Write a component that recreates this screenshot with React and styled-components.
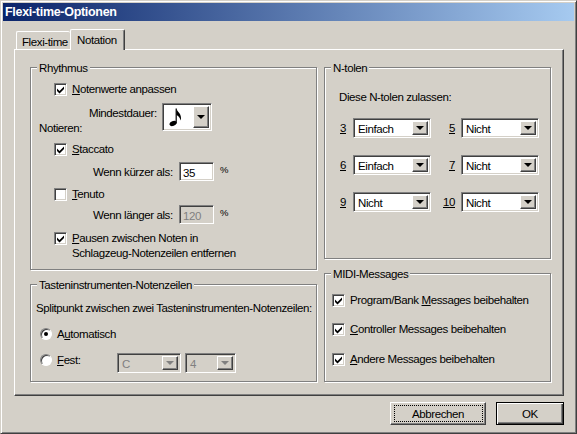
import React from 'react'
import styled, { createGlobalStyle, css } from 'styled-components'

const face = '#d4d0c8'

const Global = createGlobalStyle`
  * { box-sizing: border-box; }
  html, body { margin: 0; padding: 0; background: ${face}; }
  body {
    font: 11.5px/14px "Liberation Sans", Arial, sans-serif;
    letter-spacing: -0.4px;
    color: #000;
  }
`

const raised = css`
  border: 1px solid;
  border-color: #fff #404040 #404040 #fff;
  box-shadow: inset -1px -1px 0 #808080;
`

const sunken = css`
  border: 1px solid;
  border-color: #808080 #fff #fff #808080;
  box-shadow: inset 1px 1px 0 #404040, inset -1px -1px 0 ${face};
`

const Dialog = styled.div`
  width: 577px;
  height: 434px;
  background: ${face};
  border: 1px solid;
  border-color: ${face} #404040 #404040 ${face};
  box-shadow: inset 1px 1px 0 #fff, inset -1px -1px 0 #808080;
  padding: 2px;
  overflow: hidden;
`

const TitleBar = styled.div`
  height: 18px;
  padding: 1px 0 0 2px;
  font-weight: bold;
  font-size: 12.5px;
  line-height: 16px;
  letter-spacing: -0.3px;
  color: #fff;
  background: linear-gradient(90deg, #0a246a, #a6caf0);
`

const Tabs = styled.div`
  display: flex;
  align-items: flex-end;
  height: 20px;
  margin: 8px 0 0 13px;
  position: relative;
  z-index: 1;
`

const Tab = styled.div`
  height: ${p => (p.$active ? 21 : 18)}px;
  width: ${p => (p.$active ? 55 : 54)}px;
  margin-bottom: ${p => (p.$active ? -1 : 0)}px;
  padding: ${p => (p.$active ? '3px 0 0 6px' : '3px 0 0 5px')};
  background: ${face};
  border-top: 1px solid #fff;
  border-left: 1px solid #fff;
  border-right: ${p => (p.$active ? '1px solid #404040' : 'none')};
  border-radius: 2px 2px 0 0;
  box-shadow: ${p => (p.$active ? 'inset -1px 0 0 #808080' : 'none')};
  white-space: nowrap;
`

const Panel = styled.div`
  display: flex;
  gap: 7px;
  width: 550px;
  height: 347px;
  margin-left: 11px;
  padding: 17px 0 0 15px;
  border: 1px solid;
  border-color: #fff #404040 #404040 #fff;
  box-shadow: inset -1px -1px 0 #808080;
`

const Column = styled.div`
  display: flex;
  flex-direction: column;
  gap: 14px;
  width: ${p => p.$w}px;
`

const Group = styled.div`
  position: relative;
  display: flex;
  flex-direction: column;
  align-items: flex-start;
  height: ${p => p.$h}px;
  padding-top: ${p => p.$pt}px;
  border: 1px solid #808080;
  box-shadow: 1px 1px 0 #fff, inset 1px 1px 0 #fff;
`

const Legend = styled.div`
  position: absolute;
  top: -7px;
  left: 6px;
  padding: 0 2px;
  background: ${face};
  white-space: nowrap;
`

const Row = styled.div`
  display: flex;
  align-items: ${p => p.$align || 'center'};
  gap: ${p => p.$gap || 0}px;
  height: ${p => p.$h || 14}px;
  margin-top: ${p => p.$mt || 0}px;
  margin-left: ${p => p.$ml || 0}px;
  white-space: nowrap;
`

const Key = styled.span`
  text-decoration: underline;
`

const CheckBox = styled.span`
  ${sunken}
  display: flex;
  align-items: center;
  justify-content: center;
  flex: none;
  width: 13px;
  height: 13px;
  background: #fff;
`

const RadioBox = styled.span`
  display: flex;
  align-items: center;
  justify-content: center;
  flex: none;
  width: 12px;
  height: 12px;
  border-radius: 50%;
  border: 1px solid;
  border-color: #808080 #fff #fff #808080;
  box-shadow: inset 1px 1px 0 #404040;
  background: #fff;
  margin-top: ${p => p.$mt || 0}px;
`

const RadioDot = styled.span`
  width: 4px;
  height: 4px;
  border-radius: 50%;
  background: #000;
`

const Label = styled.span`
  display: block;
  flex: none;
  width: ${p => (p.$w ? `${p.$w}px` : 'auto')};
  margin-top: ${p => p.$mt || 0}px;
  margin-left: ${p => p.$ml || 0}px;
`

const Percent = styled.span`
  flex: none;
  margin: -3px 0 0 6px;
  font-size: 9.5px;
`

const Digit = styled.span`
  flex: none;
  width: ${p => p.$w}px;
  padding-right: ${p => p.$pr}px;
  text-align: right;
`

const SecondLine = styled.div`
  margin: 1px 0 0 41px;
  white-space: nowrap;
`

const Field = styled.span`
  ${sunken}
  display: block;
  flex: none;
  width: 35px;
  height: 19px;
  padding: 3px 0 0 3px;
  background: ${p => (p.$disabled ? face : '#fff')};
  color: ${p => (p.$disabled ? '#808080' : '#000')};
`

const Combo = styled.span`
  ${sunken}
  display: flex;
  flex: none;
  justify-content: space-between;
  width: ${p => p.$w}px;
  height: ${p => p.$h}px;
  margin-left: ${p => p.$ml || 0}px;
  padding: 2px;
  background: ${p => (p.$disabled ? face : '#fff')};
  color: ${p => (p.$disabled ? '#808080' : '#000')};
`

const ComboText = styled.span`
  padding: 1px 0 0 2px;
`

const ComboButton = styled.span`
  ${raised}
  display: flex;
  align-items: center;
  justify-content: center;
  flex: none;
  width: 16px;
  background: ${face};
  &::after {
    content: '';
    border: 4px solid transparent;
    border-top-color: ${p => (p.$disabled ? '#808080' : '#000')};
    border-bottom-width: 0;
  }
`

const Footer = styled.div`
  display: flex;
  justify-content: flex-end;
  gap: 10px;
  width: 561px;
  margin-top: 6px;
`

const Button = styled.div`
  ${raised}
  display: flex;
  align-items: center;
  justify-content: center;
  width: ${p => p.$w}px;
  height: 23px;
  background: ${face};
  ${p => p.$default && css`
    border-color: #000;
    box-shadow: inset 1px 1px 0 #fff, inset -1px -1px 0 #404040, inset -2px -2px 0 #808080;
  `}
`

const FocusRing = styled.span`
  display: flex;
  align-items: center;
  justify-content: center;
  width: 89px;
  height: 17px;
  border: 1px dotted #000;
`

const Check = () => (
  <svg width="11" height="11" viewBox="0 0 11 11">
    <path d="M2 4.5l2.5 2.5L9 2.5v2.6L4.5 9.6 2 7.1z" fill="#000" />
  </svg>
)

const CheckRow = ({ checked, ml, mt, children }) => (
  <Row $gap={5} $ml={ml} $mt={mt}>
    <CheckBox>{checked && <Check />}</CheckBox>
    <Label>{children}</Label>
  </Row>
)

const EighthNote = () => (
  <svg width="14" height="20" viewBox="0 0 14 20">
    <ellipse cx="4" cy="16.5" rx="3.6" ry="2.4" transform="rotate(-20 4 16.5)" fill="#000" />
    <path d="M6.6 1.5h1.2v15H6.6z" fill="#000" />
    <path d="M7.4 1.5c.4 3 4.6 4.4 4.6 9.5 0 1-.3 2-.7 2.6.2-3.2-2.4-4.8-3.9-5.6z" fill="#000" />
  </svg>
)

const NoteValue = styled.span`
  padding: 1px 0 0 4px;
`

const tuplets = [
  ['3', 'Einfach', '5', 'Nicht'],
  ['6', 'Einfach', '7', 'Nicht'],
  ['9', 'Nicht', '10', 'Nicht'],
]

const App = () => (
  <>
    <Global />
    <Dialog>
      <TitleBar>Flexi-time-Optionen</TitleBar>
      <Tabs>
        <Tab>Flexi-time</Tab>
        <Tab $active>Notation</Tab>
      </Tabs>
      <Panel>
        <Column $w={287}>
          <Group $h={203} $pt={14}>
            <Legend>Rhythmus</Legend>
            <CheckRow checked ml={23}><Key>N</Key>otenwerte anpassen</CheckRow>
            <Row $h={28} $mt={7} $ml={8} $align="flex-start">
              <Label $w={50} $mt={18}>Notieren:</Label>
              <Label $w={73} $mt={3}>Mindestdauer:</Label>
              <Combo $w={50} $h={28}>
                <NoteValue><EighthNote /></NoteValue>
                <ComboButton />
              </Combo>
            </Row>
            <CheckRow checked ml={23} mt={11}><Key>S</Key>taccato</CheckRow>
            <Row $h={19} $mt={6} $ml={62}>
              <Label $w={86}>Wenn kürzer als:</Label>
              <Field>35</Field>
              <Percent>%</Percent>
            </Row>
            <CheckRow ml={23} mt={6}><Key>T</Key>enuto</CheckRow>
            <Row $h={19} $mt={4} $ml={62}>
              <Label $w={86}>Wenn länger als:</Label>
              <Field $disabled>120</Field>
              <Percent>%</Percent>
            </Row>
            <CheckRow checked ml={23} mt={7}><Key>P</Key>ausen zwischen Noten in</CheckRow>
            <SecondLine>Schlagzeug-Notenzeilen entfernen</SecondLine>
          </Group>
          <Group $h={98} $pt={16}>
            <Legend>Tasteninstrumenten-Notenzeilen</Legend>
            <Row $ml={5}>Splitpunkt zwischen zwei Tasteninstrumenten-Notenzeilen:</Row>
            <Row $mt={12} $ml={9} $gap={5}>
              <RadioBox><RadioDot /></RadioBox>
              <Label>A<Key>u</Key>tomatisch</Label>
            </Row>
            <Row $h={20} $mt={12} $ml={9} $align="flex-start">
              <RadioBox $mt={1} />
              <Label $w={60} $ml={5}><Key>F</Key>est:</Label>
              <Combo $w={64} $h={20} $disabled>
                <ComboText>C</ComboText>
                <ComboButton $disabled />
              </Combo>
              <Combo $w={51} $h={20} $ml={4} $disabled>
                <ComboText>4</ComboText>
                <ComboButton $disabled />
              </Combo>
            </Row>
          </Group>
        </Column>
        <Column $w={227}>
          <Group $h={192} $pt={22}>
            <Legend>N-tolen</Legend>
            <Row $ml={14}>Diese N-tolen zulassen:</Row>
            {tuplets.map((r, i) => (
              <Row key={r[0]} $h={20} $mt={i === 0 ? 14 : 17}>
                <Digit $w={28} $pr={7}><Key>{r[0]}</Key></Digit>
                <Combo $w={78} $h={20}>
                  <ComboText>{r[1]}</ComboText>
                  <ComboButton />
                </Combo>
                <Digit $w={30} $pr={6}><Key>{r[2]}</Key></Digit>
                <Combo $w={78} $h={20}>
                  <ComboText>{r[3]}</ComboText>
                  <ComboButton />
                </Combo>
              </Row>
            ))}
          </Group>
          <Group $h={109} $pt={19}>
            <Legend>MIDI-Messages</Legend>
            <CheckRow checked ml={7}>Program/Bank <Key>M</Key>essages beibehalten</CheckRow>
            <CheckRow checked ml={7} mt={15}><Key>C</Key>ontroller Messages beibehalten</CheckRow>
            <CheckRow checked ml={7} mt={16}><Key>A</Key>ndere Messages beibehalten</CheckRow>
          </Group>
        </Column>
      </Panel>
      <Footer>
        <Button $w={96}><FocusRing>Abbrechen</FocusRing></Button>
        <Button $w={68} $default>OK</Button>
      </Footer>
    </Dialog>
  </>
)

export default App
